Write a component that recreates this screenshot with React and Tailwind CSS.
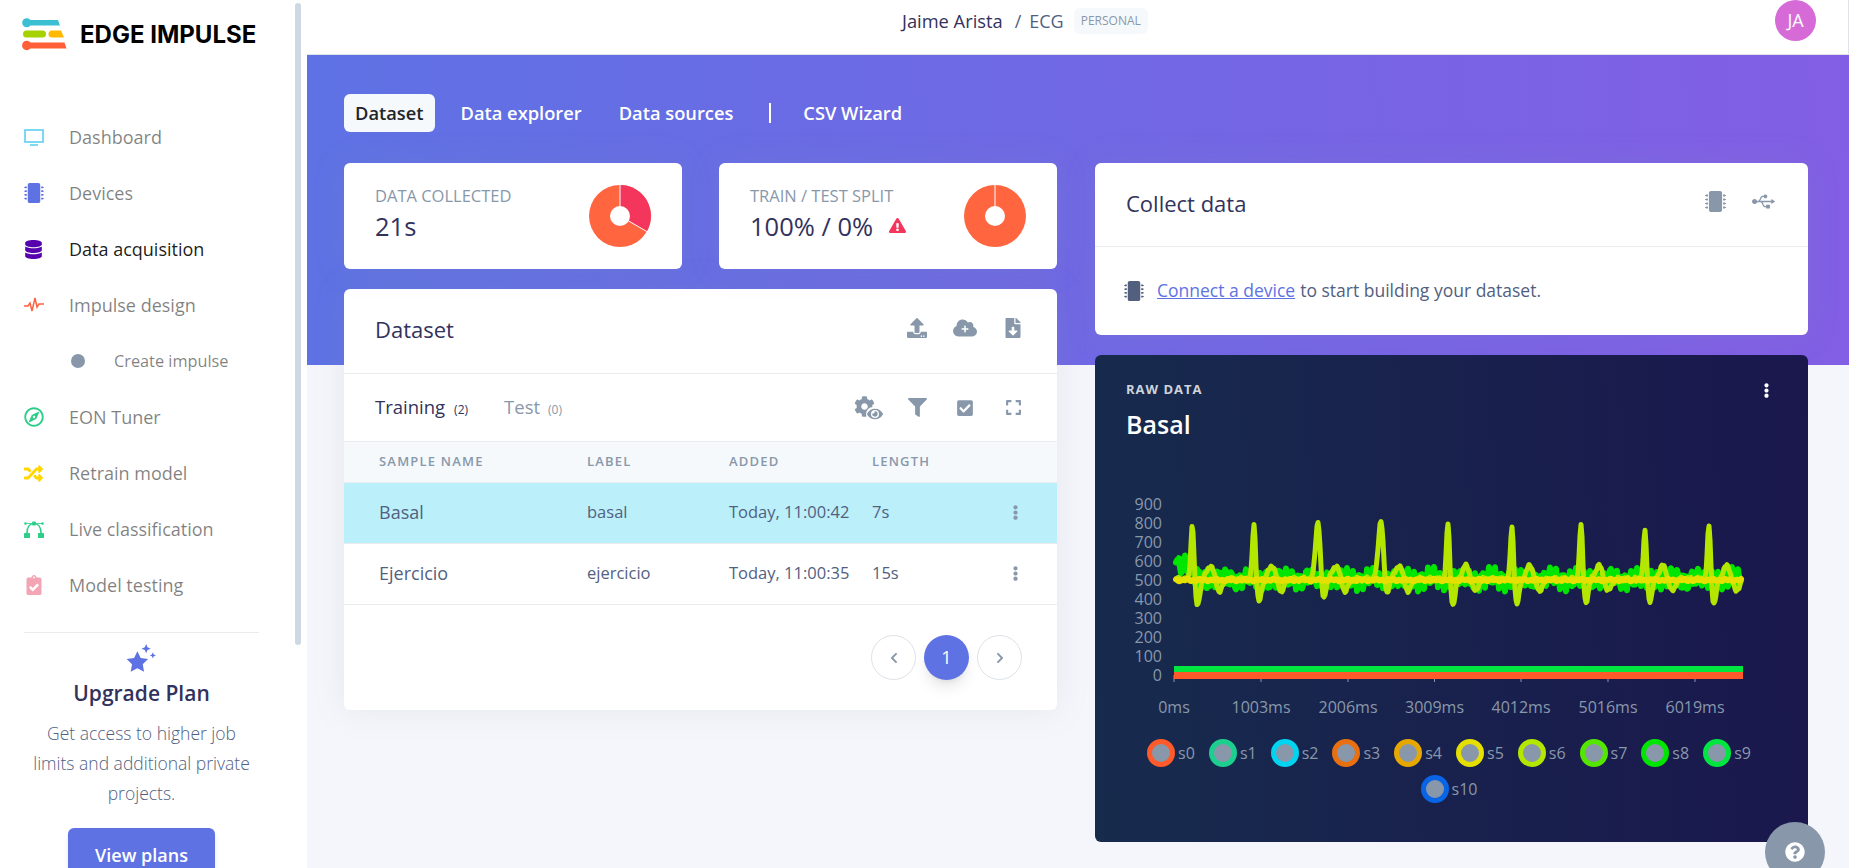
import React from 'react';
import {
  FaMicrochip, FaDatabase, FaRegCompass, FaRandom, FaClipboardCheck,
  FaUpload, FaCloud, FaPlus, FaFileDownload, FaCog, FaEye, FaFilter, FaCheckSquare, FaExpand,
  FaEllipsisV, FaChevronLeft, FaChevronRight, FaUsb, FaExclamationTriangle, FaQuestionCircle,
} from 'react-icons/fa';

const MonitorIcon = () => (
  <svg width="20" height="17" viewBox="0 0 20 17" fill="none" stroke="#5ccff0" strokeWidth="1.6">
    <rect x="1" y="1" width="18" height="12" />
    <path d="M6 16h8" />
  </svg>
);

const PulseIcon = () => (
  <svg width="20" height="16" viewBox="0 0 20 16" fill="none" stroke="#fb6340" strokeWidth="1.5">
    <path d="M0 9h4l2-3 2 8 3-13 2 9 2-3h5" />
  </svg>
);

const BezierIcon = () => (
  <svg width="20" height="20" viewBox="0 0 20 20" fill="#2dce89">
    <path d="M3 14C3 8 6 4.500 10 4.500S17 8 17 14" fill="none" stroke="#2dce89" strokeWidth="1.600" />
    <path d="M1.500 4.500h17" stroke="#2dce89" strokeWidth="0.800" />
    <circle cx="1.500" cy="4.500" r="1.300" />
    <circle cx="18.500" cy="4.500" r="1.300" />
    <rect x="8" y="2.500" width="4" height="4" rx="1" />
    <rect x="0" y="14" width="6" height="5" rx="0.500" />
    <rect x="14" y="14" width="6" height="5" rx="0.500" />
  </svg>
);

const navItems = [
  { label: 'Dashboard', icon: <MonitorIcon /> },
  { label: 'Devices', icon: <FaMicrochip size={20} color="#5e72e4" /> },
  { label: 'Data acquisition', icon: <FaDatabase size={19} color="#5603ad" />, active: true },
  { label: 'Impulse design', icon: <PulseIcon /> },
  { label: 'Create impulse', sub: true },
  { label: 'EON Tuner', icon: <FaRegCompass size={20} color="#2dce89" /> },
  { label: 'Retrain model', icon: <FaRandom size={19} color="#ffd600" /> },
  { label: 'Live classification', icon: <BezierIcon /> },
  { label: 'Model testing', icon: <FaClipboardCheck size={20} color="#f3a4b5" /> },
];

const Logo = () => (
  <svg width="46" height="33" viewBox="0 0 46 33" className="shrink-0">
    <circle cx="4.7" cy="4.7" r="4.5" fill="#3bbfd3" />
    <path d="M4 2h32l2 5.500H4z" fill="#3bbfd3" />
    <rect x="1" y="12.500" width="23" height="7" rx="3.500" fill="#a5d200" />
    <path d="M30 12.500h9l3 7H30a3.500 3.500 0 0 1 0-7z" fill="#ffb900" />
    <circle cx="4.700" cy="27.500" r="4.700" fill="#ff5f37" />
    <path d="M4 24.500h38.500l2 6H4z" fill="#ff5f37" />
  </svg>
);

const Sidebar = () => (
  <aside className="relative w-[307px] shrink-0 h-full overflow-hidden bg-white">
    <div className="absolute left-[295px] top-[3px] w-[6px] h-[642px] rounded bg-[#ced8e2]"></div>
    <div className="flex gap-[12px] pl-[22px] pt-[18px] h-[109px] items-start">
      <Logo />
      <span className="font-['Inter',sans-serif] font-bold text-[24px] leading-[33px] text-black whitespace-nowrap">EDGE IMPULSE</span>
    </div>
    <nav className="flex flex-col">
      {navItems.map((item) =>
        item.sub ? (
          <div key={item.label} className="flex items-center h-[56px] pl-[71px]">
            <span className="w-[14px] h-[14px] rounded-full bg-[#8898aa]"></span>
            <span className="ml-[29px] text-[16.300px] text-black/50">{item.label}</span>
          </div>
        ) : (
          <div key={item.label} className="flex items-center h-[56px] pl-[24px]">
            <span className="w-[45px] flex items-center">{item.icon}</span>
            <span className={item.active ? 'text-[18px] text-black/90' : 'text-[18px] text-black/50'}>{item.label}</span>
          </div>
        )
      )}
    </nav>
    <div className="mx-[24px] w-[235px] mt-[19px] border-t border-[#e9ecef] flex flex-col items-center pt-[10px]">
      <svg width="33" height="33" viewBox="0 0 32 32" fill="#5e72e4">
        <path d="M12 8l3.200 6.600 7.200 1-5.200 5 1.300 7.200L12 24.400l-6.500 3.400 1.300-7.200-5.200-5 7.200-1z" />
        <path d="M20.500 1l1.300 3.200L25 5.500l-3.200 1.300L20.500 10l-1.300-3.200L16 5.500l3.200-1.300z" />
        <path d="M27 9l.9 2.100L30 12l-2.100.900L27 15l-.9-2.100L24 12l2.100-.9z" />
      </svg>
      <h3 className="mt-[2px] text-[21px] leading-[30px] font-semibold text-[#32325d] whitespace-nowrap">Upgrade Plan</h3>
      <p className="mt-[10px] text-[17.500px] leading-[30px] font-light text-[#525f7f] text-center whitespace-nowrap">
        Get access to higher job<br />limits and additional private<br />projects.
      </p>
      <button className="mt-[20px] w-[147px] h-[54px] rounded-md bg-[#5e72e4] text-white font-semibold text-[18px] shadow-md">View plans</button>
    </div>
  </aside>
);

const Pie = ({ split }) => (
  <svg width="62" height="62" viewBox="-31 -31 62 62" className="shrink-0">
    <circle r="31" fill="#ff6640" />
    {split && <path d="M0 0V-31A31 31 0 0 1 26.800 15.500z" fill="#f5365c" />}
    <path d={split ? 'M0 0V-31M0 0L26.800 15.500' : 'M0 0V-31'} stroke="#ffffff" strokeWidth="1" />
    <circle r="10" fill="#ffffff" />
  </svg>
);

const cardShadow = 'shadow-[0_0_2rem_0_rgba(136,152,170,0.15)]';

const StatCard = ({ title, value, warn, split }) => (
  <div className={`flex-1 h-[106px] bg-white rounded-md ${cardShadow} flex items-center justify-between pl-[31px] pr-[31px]`}>
    <div className="mb-[4px]">
      <div className="text-[16.500px] leading-[22px] text-[#8898aa] uppercase whitespace-nowrap">{title}</div>
      <div className="mt-[1px] flex items-center text-[25.500px] leading-[36px] font-medium text-[#32325d] whitespace-nowrap">
        {value}
        {warn && <FaExclamationTriangle size={17} color="#f5365c" className="ml-[16px]" />}
      </div>
    </div>
    <Pie split={split} />
  </div>
);

const rows = [
  { name: 'Basal', label: 'basal', added: 'Today, 11:00:42', length: '7s', selected: true },
  { name: 'Ejercicio', label: 'ejercicio', added: 'Today, 11:00:35', length: '15s' },
];

const IconBox = ({ children }) => <span className="w-[48px] flex items-center justify-center">{children}</span>;

const DatasetCard = () => (
  <div className={`mt-[20px] bg-white rounded-md ${cardShadow}`}>
    <div className="h-[85px] flex items-center justify-between pl-[31px] pr-[20px] border-b border-[#e9ecef]">
      <h3 className="text-[22px] font-medium text-[#32325d] mb-[3px]">Dataset</h3>
      <div className="flex items-center text-[#8898aa] mb-[6px]">
        <IconBox><FaUpload size={20} /></IconBox>
        <IconBox>
          <span className="relative flex items-center justify-center">
            <FaCloud size={24} />
            <FaPlus size={8} color="#ffffff" className="absolute top-[9px]" />
          </span>
        </IconBox>
        <IconBox><FaFileDownload size={20} /></IconBox>
      </div>
    </div>
    <div className="h-[67px] flex items-center justify-between pl-[31px] pr-[20px]">
      <div className="flex items-baseline mb-[2px]">
        <span className="text-[18.500px] font-medium text-[#32325d]">Training</span>
        <span className="ml-[9px] text-[12px] text-[#32325d]">(2)</span>
        <span className="ml-[36px] text-[18.500px] text-[#8898aa] font-medium">Test</span>
        <span className="ml-[8px] text-[12px] text-[#8898aa]">(0)</span>
      </div>
      <div className="flex items-center text-[#8898aa]">
        <IconBox>
          <span className="relative w-[30px] h-[24px]">
            <FaCog size={21} className="absolute left-0 top-0" />
            <span className="absolute left-[12px] top-[11px] w-[18px] h-[14px] bg-white rounded-full flex items-center justify-center">
              <FaEye size={16} />
            </span>
          </span>
        </IconBox>
        <IconBox><FaFilter size={19} /></IconBox>
        <IconBox><FaCheckSquare size={18} /></IconBox>
        <IconBox><FaExpand size={17} /></IconBox>
      </div>
    </div>
    <div className="h-[42px] grid grid-cols-[208px_142px_143px_1fr] items-center pl-[35px] bg-[#f6f9fc] border-y border-[#e9ecef] text-[13px] font-semibold tracking-[1.200px] uppercase text-[#8898aa]">
      <span>Sample name</span>
      <span>Label</span>
      <span>Added</span>
      <span>Length</span>
    </div>
    {rows.map((row) => (
      <div
        key={row.name}
        className={`h-[61px] pb-[2px] grid grid-cols-[208px_142px_143px_1fr_49px] items-center pl-[35px] border-b border-[#e9ecef] text-[16.500px] text-[#525f7f] ${row.selected ? 'bg-[#bbf0fb]' : 'bg-white'}`}
      >
        <span className="text-[18px] font-medium">{row.name}</span>
        <span>{row.label}</span>
        <span className="whitespace-nowrap">{row.added}</span>
        <span>{row.length}</span>
        <FaEllipsisV size={15} color="#8898aa" />
      </div>
    ))}
    <div className="flex justify-end gap-[8px] pt-[30px] pb-[30px] pr-[35px]">
      <button className="w-[45px] h-[45px] rounded-full border border-[#dee2e6] flex items-center justify-center text-[#8898aa]"><FaChevronLeft size={12} /></button>
      <button className="w-[45px] h-[45px] rounded-full bg-[#5e72e4] text-white text-[18px] shadow-lg">1</button>
      <button className="w-[45px] h-[45px] rounded-full border border-[#dee2e6] flex items-center justify-center text-[#8898aa]"><FaChevronRight size={12} /></button>
    </div>
  </div>
);

const CollectCard = () => (
  <div className={`h-[172px] bg-white rounded-md ${cardShadow}`}>
    <div className="h-[84px] flex items-center justify-between pl-[31px] pr-[21px] border-b border-[#e9ecef]">
      <h3 className="text-[22px] font-medium text-[#32325d] mb-[3px]">Collect data</h3>
      <div className="flex items-center text-[#8898aa] mb-[6px]">
        <IconBox><FaMicrochip size={21} /></IconBox>
        <IconBox><FaUsb size={23} /></IconBox>
      </div>
    </div>
    <div className="h-[87px] flex items-center pl-[29px] text-[17.500px] text-[#525f7f] whitespace-nowrap">
      <FaMicrochip size={20} className="mr-[13px]" />
      <a href="#" className="text-[#5e72e4] underline">Connect a device</a>
      <span className="ml-[5px]">to start building your dataset.</span>
    </div>
  </div>
);

// plot is 569px wide, 0 sits at y=185 and 100 units are 19px
const X0 = 79;
const X1 = 648;
const toY = (v) => 185 - v * 0.19;

const peaks = [
  { x: 97.4, top: 800, low: 365, w: 1.5 },
  { x: 159, top: 805, low: 385, w: 1.5 },
  { x: 223, top: 815, low: 380, w: 2.4 },
  { x: 286, top: 820, low: 400, w: 2.6 },
  { x: 353, top: 805, low: 370, w: 1.5 },
  { x: 417, top: 785, low: 375, w: 1.5 },
  { x: 486, top: 798, low: 385, w: 1.5 },
  { x: 550, top: 760, low: 390, w: 1.5 },
  { x: 614, top: 795, low: 375, w: 1.5 },
];

const gauss = (x, c, s) => Math.exp(-((x - c) * (x - c)) / (2 * s * s));

const buildPath = (fn) => {
  let d = '';
  for (let x = X0 + 2; x <= X1 - 2; x += 1) {
    d += `${d ? 'L' : 'M'}${x} ${toY(fn(x)).toFixed(1)}`;
  }
  return d;
};

const greenLine = (x) => {
  let v = 505 + 30 * Math.sin(x * 0.93) + 24 * Math.sin(x * 2.17 + 1) + 14 * Math.sin(x * 0.21);
  v += 90 * gauss(x, X0 + 5, 9);
  return v;
};

const ecgLine = (x) => {
  let v = 505 + 6 * Math.sin(x * 0.7) + 5 * Math.sin(x * 1.9);
  peaks.forEach((p) => {
    v += (p.top - 505) * gauss(x, p.x, p.w);
    v += (p.low - 505) * gauss(x, p.x + 5, 2.2);
    v += 70 * gauss(x, p.x + 18, 3.5);
    v -= 65 * gauss(x, p.x + 27, 3);
  });
  return v;
};

const yellowLine = (x) => 500 + 4 * Math.sin(x * 1.1) + 3 * Math.sin(x * 0.43);

const yLabels = [900, 800, 700, 600, 500, 400, 300, 200, 100, 0];
const xTicks = [
  { x: 79, label: '0ms' },
  { x: 166, label: '1003ms' },
  { x: 253, label: '2006ms' },
  { x: 339.500, label: '3009ms' },
  { x: 426, label: '4012ms' },
  { x: 513, label: '5016ms' },
  { x: 600, label: '6019ms' },
];

const Chart = () => (
  <svg width="713" height="245" viewBox="0 0 713 245" className="block" fontFamily="'Open Sans', sans-serif">
    {yLabels.map((v) => (
      <text key={v} x="67" y={toY(v) + 5.500} textAnchor="end" fontSize="16" fill="#8898aa">{v}</text>
    ))}
    {xTicks.map((t) => (
      <g key={t.label}>
        <line x1={t.x} x2={t.x} y1="185" y2="192" stroke="#8898aa" strokeWidth="1" />
        <text x={t.x} y="223" textAnchor="middle" fontSize="16" fill="#8898aa">{t.label}</text>
      </g>
    ))}
    <rect x={X0} y="176" width={X1 - X0} height="13" fill="#00e640" />
    <rect x={X0} y="182" width={X1 - X0} height="7" fill="#ff5a2a" />
    <path d={buildPath(greenLine)} fill="none" stroke="#00e600" strokeWidth="6" strokeLinejoin="round" strokeLinecap="round" />
    <path d={buildPath(ecgLine)} fill="none" stroke="#b4e600" strokeWidth="5" strokeLinejoin="round" strokeLinecap="round" />
    <path d={buildPath(yellowLine)} fill="none" stroke="#e6e000" strokeWidth="6" strokeLinejoin="round" strokeLinecap="round" />
  </svg>
);

const legend = [
  ['s0', 'border-[#ff5a2a]'],
  ['s1', 'border-[#1ccf8f]'],
  ['s2', 'border-[#00d4f0]'],
  ['s3', 'border-[#e87010]'],
  ['s4', 'border-[#e6a800]'],
  ['s5', 'border-[#e6e000]'],
  ['s6', 'border-[#b4e600]'],
  ['s7', 'border-[#55e600]'],
  ['s8', 'border-[#00e600]'],
  ['s9', 'border-[#00e640]'],
  ['s10', 'border-[#0a64e6]'],
];

const RawDataCard = () => (
  <div className="mt-[20px] h-[487px] rounded-md bg-[linear-gradient(87deg,#172b4d,#1a174d)] text-white">
    <div className="flex justify-between pl-[31px] pr-[34px] pt-[26px] h-[135px]">
      <div>
        <div className="text-[13px] leading-[16px] font-bold tracking-[1px] uppercase text-[#ced4da]">Raw data</div>
        <div className="mt-[9px] text-[25px] leading-[36px] font-semibold">Basal</div>
      </div>
      <FaEllipsisV size={15} className="mt-[2px]" />
    </div>
    <Chart />
    <div className="mx-auto w-[640px] pr-[5px] flex flex-wrap justify-center">
      {legend.map(([name, ring]) => (
        <div key={name} className="flex items-center gap-[3px] px-[7px] h-[36px] text-base text-[#8898aa]">
          <span className={`w-[28px] h-[28px] rounded-full border-[5px] bg-[#8898aa] ${ring}`}></span>
          {name}
        </div>
      ))}
    </div>
  </div>
);

const tabs = ['Data explorer', 'Data sources'];

export default function App() {
  return (
    <div className="relative flex h-screen w-full overflow-hidden font-['Open_Sans',sans-serif] bg-white">
      <Sidebar />
      <main className="flex-1 min-w-0 h-full bg-[#f5f6fb]">
        <header className="h-[55px] bg-white border-b border-r border-[#e0e3e8] flex items-start pl-[595px] pr-[32px]">
          <div className="h-[42px] flex items-center text-[18px] text-[#32325d] whitespace-nowrap">
            <span className="font-medium text-[18.300px]">Jaime Arista</span>
            <span className="ml-[12px] text-[#525f7f]">/</span>
            <span className="ml-[8px] text-[#525f7f]">ECG</span>
            <span className="ml-[10px] h-[26px] px-[7px] flex items-center rounded-md bg-[#f6f9fc] text-[12px] text-[#8898aa]">PERSONAL</span>
          </div>
          <div className="ml-auto w-[41px] h-[41px] rounded-full bg-[#d66bd8] flex items-center justify-center text-white text-[18px]">JA</div>
        </header>
        <div className="h-[813px] pt-[39px] pl-[37px] pr-[41px] bg-[linear-gradient(87deg,#5e72e4,#825ee4)] bg-no-repeat bg-[length:100%_310px]">
          <div className="flex items-center h-[38px] text-[18.300px] font-semibold text-white whitespace-nowrap">
            <span className="h-[38px] px-[11px] flex items-center rounded-md bg-[#f6f9fc] text-[#212529]">Dataset</span>
            {tabs.map((t) => (
              <span key={t} className="ml-[15px] px-[11px]">{t}</span>
            ))}
            <span className="ml-[25px] w-[2px] h-[20px] bg-white"></span>
            <span className="ml-[21px] px-[11px]">CSV Wizard</span>
          </div>
          <div className="mt-[31px] grid grid-cols-[713px_713px] gap-x-[38px]">
            <div>
              <div className="flex gap-[37px]">
                <StatCard title="Data collected" value="21s" split />
                <StatCard title="Train / test split" value="100% / 0%" warn />
              </div>
              <DatasetCard />
            </div>
            <div>
              <CollectCard />
              <RawDataCard />
            </div>
          </div>
        </div>
      </main>
      <button className="absolute left-[1765px] top-[822px] w-[60px] h-[60px] rounded-full bg-[#8898aa] flex items-center justify-center text-white">
        <FaQuestionCircle size={20} />
      </button>
    </div>
  );
}
